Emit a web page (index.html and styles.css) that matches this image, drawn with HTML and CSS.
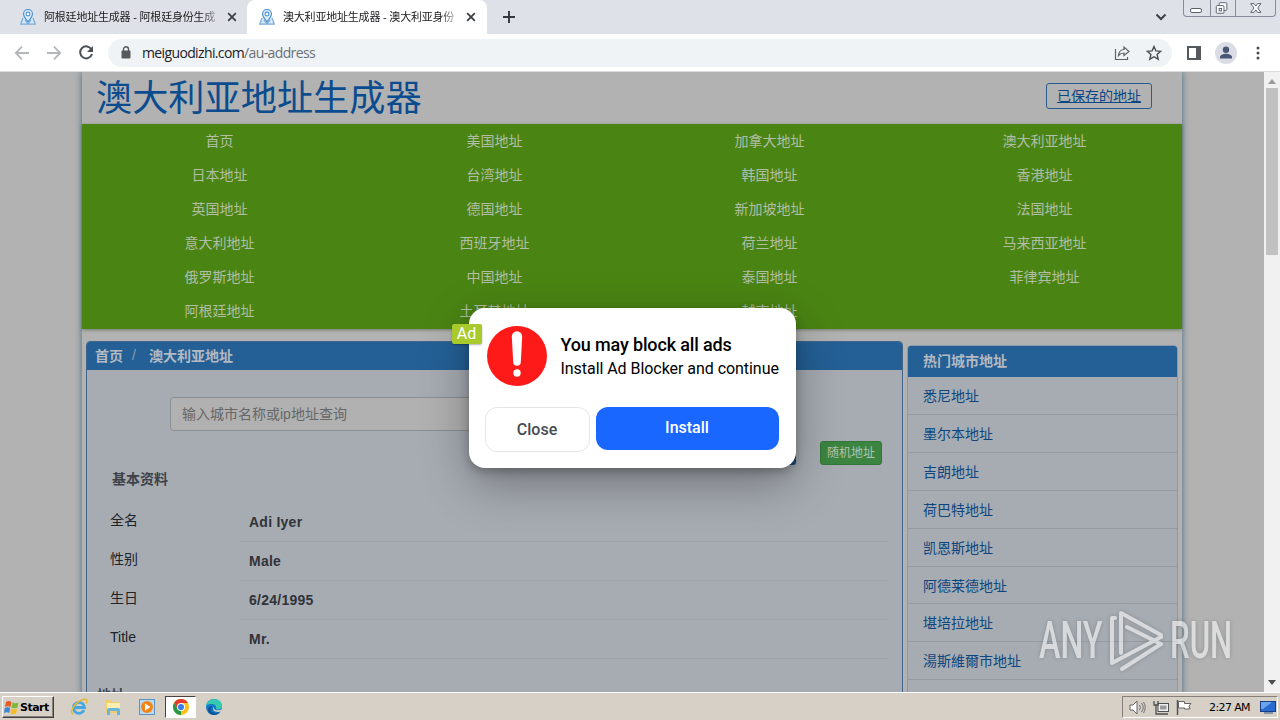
FILE: index.html
```html
<!DOCTYPE html>
<html lang="zh-CN">
<head>
  <meta charset="UTF-8" />
  <meta name="viewport" content="width=device-width, initial-scale=1" />
  <title>澳大利亚地址生成器</title>
  <link rel="stylesheet" href="styles.css">
</head>
<body>

<svg width="0" height="0" class="defs">
  <symbol id="map-pin" viewBox="0 0 16 16">
    <path d="M3 9 .7 15.2h14.6L13 9M5 11l3 4 3-4" fill="#d5e8f8" stroke="#7aabd8" stroke-width="1.2"/>
    <path d="M8 13C6 10 3.500 8 3.500 5a4.500 4.500 0 0 1 9 0c0 3-2.500 5-4.500 8z" fill="#dcecfb" stroke="#4f92d3" stroke-width="1.2"/>
    <circle cx="8" cy="5" r="1.900" fill="#fff" stroke="#4f92d3" stroke-width="1.1"/>
  </symbol>
  <symbol id="cross" viewBox="0 0 10 10"><path d="m1.200 1.200 7.600 7.600m0-7.600L1.200 8.800" stroke="#3c4043" stroke-width="1.800"/></symbol>
</svg>

<!-- Tab strip -->
<div class="tabs">
  <div class="tab">
    <svg class="favicon"><use href="#map-pin"/></svg>
    <span class="tab-title">阿根廷地址生成器 - 阿根廷身份生成</span>
    <svg class="tab-close"><use href="#cross"/></svg>
  </div>
  <div class="tab active">
    <svg class="favicon"><use href="#map-pin"/></svg>
    <span class="tab-title">澳大利亚地址生成器 - 澳大利亚身份</span>
    <svg class="tab-close"><use href="#cross"/></svg>
  </div>
  <svg class="new-tab" viewBox="0 0 12 12"><path d="M6 0v12M0 6h12" stroke="#35393e" stroke-width="1.900"/></svg>
  <svg class="tab-search" viewBox="0 0 12 8"><path d="m1.500 1.500 4.500 4.500 4.500-4.500" fill="none" stroke="#3c4043" stroke-width="2"/></svg>
  <div class="window-buttons">
    <svg width="26" height="16" viewBox="0 0 26 16"><rect x="6.500" y="8.500" width="11" height="4" rx="1.500" fill="#fff" stroke="#5a616c"/></svg>
    <svg width="25" height="16" viewBox="0 0 25 16"><g fill="#fff" stroke="#5a616c"><rect x="8.500" y="2.500" width="8" height="8" rx="1"/><rect x="5.500" y="5.500" width="8" height="8" rx="1"/><rect x="8.500" y="8.500" width="2.500" height="2.500"/></g></svg>
    <svg width="42" height="16" viewBox="0 0 42 16"><path d="M15 3.500h3.500l1.800 2.500 1.800-2.500h3.500L22.200 8l3.400 4.500h-3.500L20.300 10l-1.800 2.500H15L18.400 8z" fill="#fff" stroke="#5a616c"/></svg>
  </div>
</div>

<!-- Address bar -->
<div class="toolbar">
  <svg class="nav-icon" viewBox="0 0 16 16"><path d="M15 8H2m6-6.300L1.800 8 8 14.300" fill="none" stroke="#b4b7bb" stroke-width="1.800"/></svg>
  <svg class="nav-icon" viewBox="0 0 16 16"><path d="M1 8h13M8 1.700 14.200 8 8 14.300" fill="none" stroke="#b4b7bb" stroke-width="1.800"/></svg>
  <svg class="nav-icon" viewBox="0 0 16 16"><path d="M13.500 4.500A6 6 0 1 0 14 9" fill="none" stroke="#4b4f54" stroke-width="2"/><path d="M15 1v6H9z" fill="#4b4f54"/></svg>
  <div class="omnibox">
    <svg width="10" height="13" viewBox="0 0 10 13"><rect x=".5" y="4.500" width="9" height="8" rx="1" fill="#55595e"/><path d="M2.500 5V3.200a2.500 2.500 0 0 1 5 0V5" fill="none" stroke="#55595e" stroke-width="1.400"/></svg>
    <span class="url">meiguodizhi.com<span class="path">/au-address</span></span>
    <svg class="share" viewBox="0 0 16 16"><path d="M1.500 4v10.500h12V12M4.500 10.500C5 6.500 7.500 4.500 10 4.500V2l5 4.500-5 4V8c-2.500 0-4 .7-5.500 2.500z" fill="none" stroke="#5f6368" stroke-width="1.200"/></svg>
    <svg class="star" viewBox="0 0 16 16"><path d="m8 1.500 1.900 4.400 4.800.4-3.600 3.200 1.100 4.700L8 11.700l-4.200 2.500 1.100-4.700L1.300 6.300l4.800-.4z" fill="none" stroke="#4b4f54" stroke-width="1.400"/></svg>
  </div>
  <svg class="side-panel" viewBox="0 0 14 14"><path d="M0 0h14v14H0zM2 2v10h7V2z" fill="#55595e" fill-rule="evenodd"/></svg>
  <svg class="profile" viewBox="0 0 22 22"><circle cx="11" cy="11" r="11" fill="#dadde4"/><circle cx="11" cy="7.800" r="3.200" fill="#4b5575"/><path d="M5 16.500v-1.300c0-2.200 3.500-3.400 6-3.400s6 1.200 6 3.400v1.300z" fill="#4b5575"/></svg>
  <svg class="more" viewBox="0 0 4 14"><g fill="#4b4f54"><circle cx="2" cy="2" r="1.500"/><circle cx="2" cy="7" r="1.500"/><circle cx="2" cy="12" r="1.500"/></g></svg>
</div>

<!-- Page -->
<div class="viewport">
  <div class="page">
    <div class="container">
      <div class="header">
        <h1>澳大利亚地址生成器</h1>
        <a class="saved">已保存的地址</a>
      </div>
      <div class="menu">
        <a>首页</a><a>美国地址</a><a>加拿大地址</a><a>澳大利亚地址</a>
        <a>日本地址</a><a>台湾地址</a><a>韩国地址</a><a>香港地址</a>
        <a>英国地址</a><a>德国地址</a><a>新加坡地址</a><a>法国地址</a>
        <a>意大利地址</a><a>西班牙地址</a><a>荷兰地址</a><a>马来西亚地址</a>
        <a>俄罗斯地址</a><a>中国地址</a><a>泰国地址</a><a>菲律宾地址</a>
        <a>阿根廷地址</a><a>土耳其地址</a><a>越南地址</a>
      </div>
      <div class="columns">
        <div class="panel main">
          <div class="breadcrumb"><b>首页</b><span class="sep">/</span><b>澳大利亚地址</b></div>
          <div class="search">输入城市名称或ip地址查询</div>
          <div class="actions"><span class="btn-blue"></span><span class="btn-green">随机地址</span></div>
          <h4>基本资料</h4>
          <div class="row"><span>全名</span><strong>Adi Iyer</strong></div>
          <div class="row"><span>性别</span><strong>Male</strong></div>
          <div class="row"><span>生日</span><strong>6/24/1995</strong></div>
          <div class="row"><span>Title</span><strong>Mr.</strong></div>
          <h4 class="next">地址</h4>
        </div>
        <div class="panel side">
          <div class="side-head">热门城市地址</div>
          <a>悉尼地址</a>
          <a>墨尔本地址</a>
          <a>吉朗地址</a>
          <a>荷巴特地址</a>
          <a>凯恩斯地址</a>
          <a>阿德莱德地址</a>
          <a>堪培拉地址</a>
          <a>湯斯維爾市地址</a>
          <a>达尔文地址</a>
        </div>
      </div>
    </div>
  </div>
  <div class="scrollbar">
    <svg width="8" height="5" viewBox="0 0 8 5"><path d="M0 5h8L4 0z" fill="#9b9b9b"/></svg>
    <div class="thumb"></div>
    <svg class="down" width="8" height="5" viewBox="0 0 8 5"><path d="M0 0h8L4 5z" fill="#4d4d4d"/></svg>
  </div>
</div>

<!-- Ad popup -->
<div class="popup">
  <span class="ad-badge">Ad</span>
  <div class="popup-top">
    <svg width="60" height="60" viewBox="0 0 60 60"><circle cx="30" cy="30" r="30" fill="#ff1a1a"/><path d="M24.800 10.500a5.200 5.200 0 0 1 10.400 0L33.800 36a3.800 3.800 0 0 1-7.600 0z" fill="#fff"/><circle cx="30" cy="47" r="3.700" fill="#fff"/></svg>
    <div>
      <div class="popup-title">You may block all ads</div>
      <div class="popup-text">Install Ad Blocker and continue</div>
    </div>
  </div>
  <div class="popup-buttons">
    <button class="close">Close</button>
    <button class="install">Install</button>
  </div>
</div>

<!-- Watermark -->
<div class="watermark">
  <span>ANY</span>
  <svg width="56" height="62" viewBox="0 0 56 62">
    <g fill="none" stroke="#fff" stroke-width="4" stroke-linecap="round" stroke-linejoin="round">
      <path d="M6 8H3v45l49-26"/>
      <path d="M12 43V3l40 22v2"/>
      <path d="M18 17l34 17-39 25"/>
    </g>
  </svg>
  <span>RUN</span>
</div>

<!-- Taskbar -->
<div class="taskbar">
  <div class="start">
    <svg width="15" height="15" viewBox="0 0 15 15"><path d="M2 2q3-2 5.500 0L6.500 7Q4 5.500 1 7z" fill="#e65a26"/><path d="M8.500 2.500q3 1.500 6 0l-1 5q-3 1.500-6 0z" fill="#7cb73c"/><path d="M.8 8Q4 6.500 6.200 8l-1 5Q3 11.500 0 13z" fill="#3f86d2"/><path d="M7.200 8.500q3 1.500 6 0l-1 5q-3 1.500-6 0z" fill="#f5bb2d"/></svg>
    Start
  </div>
  <svg class="task-icon" viewBox="0 0 18 18"><path d="M14 12.200A5.500 5.500 0 1 1 14.500 9.500H5" fill="none" stroke="#45a7e3" stroke-width="2.800"/><path d="M3.500 16C-2 15 5 4 13 1.500c4-1 4.500 1.500 3 4" fill="none" stroke="#e8b92e" stroke-width="1.500"/></svg>
  <svg class="task-icon" viewBox="0 0 18 18"><path d="M2 2h5l1 2h8v11H2z" fill="#f0cf69"/><path d="M3 5h13v6H3z" fill="#fbeeb0"/><path d="M3 17v-5q0-2 2-2h9q2 0 2 2v5h-3v-4H6v4z" fill="#68b5df"/></svg>
  <svg class="task-icon" viewBox="0 0 18 18"><rect x="1.500" y="1.500" width="15" height="15" fill="#b8dbf1" stroke="#5a93c4"/><circle cx="9" cy="9" r="6" fill="#f28418"/><path d="M7 5.500v7L12.500 9z" fill="#fff"/></svg>
  <div class="task-active">
    <svg width="16" height="16" viewBox="0 0 16 16"><circle cx="8" cy="8" r="8" fill="#fbc116"/><path d="M1.070 4A8 8 0 0 1 14.930 4H8L4.500 10z" fill="#e33b2e"/><path d="M1.070 4 4.540 10 8 12 8 16A8 8 0 0 1 1.070 4z" fill="#229a48"/><circle cx="8" cy="8" r="4" fill="#fff"/><circle cx="8" cy="8" r="3.100" fill="#3b7ded"/></svg>
  </div>
  <svg class="task-icon" viewBox="0 0 18 18"><circle cx="9" cy="9" r="8" fill="#1479c9"/><path d="M1 8C2-1 17-1 17 8c0 4-4 4-6 3 1-3-1-5-4-5-3-.3-5 .5-6 2z" fill="#35c9b0"/><path d="M7 8c-3 5 2 9 8 6-4 5-12 3-12-2 0-3 2-4 4-4z" fill="#0b559f"/><path d="M9.500 8c-2 3 1 5.500 8 3.500L16 13.500C10 15 6 12 9.500 8z" fill="#d6d0c7"/></svg>
  <div class="tray">
    <svg width="17" height="15" viewBox="0 0 17 15"><path d="M1 5h3l4-4v13l-4-4H1z" fill="#fff" stroke="#656565"/><path d="M10.500 5q2 2.500 0 5M12.500 3q3.500 4.500 0 9M14.500 2q3.500 5.500 0 11" fill="none" stroke="#6d6d6d"/></svg>
    <svg width="16" height="15" viewBox="0 0 16 15"><rect x="5" y="3.500" width="10.500" height="8" fill="#eee" stroke="#4f4f4f"/><path d="M7 14h8M3 6v8h4M1 1v4h4V1M3 5v3" fill="none" stroke="#4f4f4f" stroke-width="1.300"/><rect x="7" y="5.500" width="6.500" height="4" fill="#999"/></svg>
    <svg width="16" height="15" viewBox="0 0 16 15"><path d="M1.500 0v15" stroke="#555" stroke-width="1.500"/><path d="M2.500 1.500h6v2H15L13 6l1 3H8.500V8h-6z" fill="#fff" stroke="#666"/></svg>
    <span class="clock">2:27 AM</span>
    <svg width="16" height="13" viewBox="0 0 16 13"><rect x=".5" y=".5" width="15" height="10" fill="#2a6bd1" stroke="#173f84"/><path d="M1 1h11L3 8H1z" fill="#6ca5ec"/><path d="M4 12h9" stroke="#355783"/></svg>
  </div>
</div>

</body>
</html>
```
FILE: styles.css
```css
* {
  box-sizing: border-box;
}

body {
  margin: 0;
  width: 1280px;
  height: 720px;
  overflow: hidden;
  display: flex;
  flex-direction: column;
  font-family: "Liberation Sans", "Noto Sans CJK SC", sans-serif;
  font-size: 14px;
}

svg {
  flex: none;
}

.defs {
  position: absolute;
}

/* Browser tabs */
.tabs {
  height: 34px;
  flex: none;
  display: flex;
  align-items: center;
  background: #dee1e7;
}

.tab {
  height: 34px;
  display: flex;
  align-items: center;
  width: 247px;
  padding-left: 20px;
}

.tab.active {
  width: 240px;
  padding-left: 12px;
  background: #fff;
  border-radius: 8px 8px 0 0;
}

.favicon {
  width: 16px;
  height: 16px;
}

.tab-title {
  width: 174px;
  height: 18px;
  margin-left: 8px;
  white-space: nowrap;
  font-size: 11px;
  line-height: 18px;
  letter-spacing: -0.2px;
  color: #202124;
  mask-image: linear-gradient(to right, #000 90%, transparent 103%);
}

.tab-close {
  width: 10px;
  height: 10px;
  margin-left: 9px;
}

.new-tab {
  width: 12px;
  height: 12px;
  margin-left: 16px;
}

.tab-search {
  width: 12px;
  height: 8px;
  margin-left: auto;
}

.window-buttons {
  align-self: flex-start;
  display: flex;
  width: 93px;
  height: 17px;
  margin: 0 4px 0 16px;
  border: 1px solid #858b98;
  border-top: 0;
  border-radius: 0 0 4px 4px;
}

.window-buttons svg + svg {
  border-left: 1px solid #858b98;
}

/* Toolbar */
.toolbar {
  height: 38px;
  flex: none;
  display: flex;
  align-items: center;
  padding: 0 20px 0 14px;
  background: #fff;
  border-bottom: 1px solid #dadcdf;
}

.nav-icon {
  width: 16px;
  height: 16px;
  margin-right: 16px;
}

.omnibox {
  width: 1064px;
  height: 28px;
  margin-left: -2px;
  padding: 0 10px 0 13px;
  display: flex;
  align-items: center;
  background: #f0f3f5;
  border-radius: 14px;
}

.url {
  margin-left: 11px;
  font: 14px "Open Sans", sans-serif;
  letter-spacing: -0.63px;
  color: #202124;
}

.path {
  color: #6b6f74;
}

.share,
.star {
  width: 16px;
  height: 16px;
}

.share {
  margin-left: auto;
}

.star {
  margin-left: 16px;
}

.side-panel {
  width: 14px;
  height: 14px;
  margin-left: 15px;
}

.profile {
  width: 22px;
  height: 22px;
  margin-left: 14px;
}

.more {
  width: 4px;
  height: 14px;
  margin-left: auto;
}

/* Page, shown under the dimming layer of the popup */
.viewport {
  height: 620px;
  flex: none;
  display: flex;
}

.page {
  width: 1264px;
  height: 620px;
  overflow: hidden;
  background: #b2b2b2;
}

.container {
  width: 1100px;
  height: 700px;
  margin-left: 82px;
  background: #b2b2b2;
  box-shadow: 0 0 7px #476b82;
}

.header {
  height: 52px;
  padding: 0 30px 0 14px;
  display: flex;
  align-items: center;
  justify-content: space-between;
}

h1 {
  margin: 0;
  padding-top: 2px;
  font-size: 36.2px;
  font-weight: normal;
  line-height: 50px;
  color: #0b4c8f;
}

.saved {
  width: 106px;
  height: 26px;
  margin-top: -4px;
  border: 1px solid #285b91;
  border-radius: 3px;
  line-height: 24px;
  text-align: center;
  text-decoration: underline;
  color: #0b4684;
}

.menu {
  height: 205px;
  display: grid;
  grid-template-columns: repeat(4, 1fr);
  grid-auto-rows: 34px;
  background: #4a8513;
  box-shadow: 0 1px 3px rgba(50, 70, 40, 0.5);
}

.menu a {
  line-height: 34px;
  text-align: center;
  color: #b2bda5;
}

.columns {
  display: flex;
  gap: 4px;
  padding: 12px 4px 0;
}

.panel {
  height: 400px;
  background: #a7acb3;
  border: 1px solid #8799aa;
  border-radius: 4px;
}

.main {
  width: 817px;
  border-color: #40658c;
}

.breadcrumb {
  height: 28px;
  display: flex;
  align-items: center;
  padding: 0 0 2px 8px;
  background: #246096;
  border-radius: 3px 3px 0 0;
  color: #b2bac2;
}

.sep {
  width: 26px;
  padding-left: 9px;
  color: #879eb5;
}

.search {
  width: 580px;
  height: 34px;
  margin: 27px 0 0 83px;
  padding-left: 11px;
  border: 1px solid #8c8f92;
  border-radius: 4px;
  background: #b1b1b1;
  line-height: 32px;
  color: #676767;
}

.actions {
  height: 24px;
  margin-top: 10px;
  padding-right: 20px;
  display: flex;
  justify-content: flex-end;
  gap: 24px;
}

.btn-blue {
  width: 50px;
  background: #1b4b77;
  border-radius: 3px;
}

.btn-green {
  width: 62px;
  border-radius: 3px;
  background: #3b8540;
  border: 1px solid #337738;
  line-height: 22px;
  font-size: 12px;
  text-align: center;
  color: #b2c3b3;
}

h4 {
  height: 20px;
  margin: 4px 0 14px 25px;
  font-size: 14px;
  line-height: 20px;
  color: #3e4248;
}

.row {
  height: 39px;
  display: flex;
  margin-left: 23px;
  line-height: 37px;
  color: #202327;
}

.row span {
  width: 130px;
  line-height: 35px;
}

.row strong {
  width: 648px;
  padding-left: 9px;
  padding-top: 1px;
  border-bottom: 1px solid #9ea3aa;
  color: #303337;
  letter-spacing: 0.25px;
}

.next {
  margin: 26px 0 0 10px;
}

.side {
  width: 271px;
  margin-top: 4px;
}

.side-head {
  height: 31px;
  padding-left: 15px;
  background: #246096;
  border-radius: 3px 3px 0 0;
  font-weight: bold;
  line-height: 30px;
  color: #b2bac2;
}

.side a {
  display: block;
  height: 37.8px;
  padding-left: 15px;
  border-bottom: 1px solid #969ba1;
  line-height: 38px;
  color: #0d467e;
}

.side-head + a {
  height: 38.4px;
}

.scrollbar {
  width: 16px;
  padding: 7px 2px;
  display: flex;
  flex-direction: column;
  align-items: center;
  background: #f1f1f1;
}

.thumb {
  width: 12px;
  height: 167px;
  margin-top: 4px;
  background: #c1c1c1;
}

.down {
  margin-top: auto;
}

/* Ad popup */
.popup {
  position: absolute;
  left: 468.5px;
  top: 308px;
  width: 327px;
  height: 160px;
  padding: 18px 17px 0 18px;
  background: #fff;
  border-radius: 16px;
  box-shadow: 0 16px 50px rgba(0, 0, 0, 0.32), 0 4px 10px rgba(0, 0, 0, 0.25);
  font-family: Roboto, sans-serif;
}

.ad-badge {
  position: absolute;
  left: -17px;
  top: 16px;
  width: 30px;
  height: 20px;
  background: #a8ca2c;
  border-radius: 2px;
  box-shadow: 0 1px 2px rgba(0, 0, 0, 0.3);
  font-size: 16px;
  line-height: 20px;
  text-align: center;
  color: #fff;
}

.popup-top {
  height: 60px;
  display: flex;
  gap: 14px;
  white-space: nowrap;
  color: #000;
}

.popup-title {
  margin-top: 7px;
  font-size: 18px;
  font-weight: 500;
  line-height: 24px;
  letter-spacing: -0.15px;
}

.popup-text {
  font-size: 16px;
  line-height: 23px;
  letter-spacing: -0.05px;
}

.popup-buttons {
  display: flex;
  gap: 6px;
  margin: 21px 0 0 -2px;
}

.popup button {
  font: 500 16px Roboto, sans-serif;
  border-radius: 12px;
  padding: 0;
}

.close {
  width: 105px;
  height: 45px;
  border: 1px solid #e5e6e9;
  background: #fff;
  color: #464a52;
}

.popup .install {
  width: 183px;
  height: 43px;
  padding-bottom: 2px;
  border: 0;
  background: #1967ff;
  color: #fff;
}

/* Watermark */
.watermark {
  position: absolute;
  left: 1039px;
  top: 609px;
  width: 193px;
  height: 64px;
  display: flex;
  align-items: center;
  opacity: 0.55;
  filter: drop-shadow(0 0 2px rgba(70, 75, 80, 0.6));
  color: #fff;
}

.watermark svg {
  margin: 0 5px 0 6px;
}

.watermark span {
  width: 64px;
  height: 64px;
  font: 500 52px/64px Roboto, sans-serif;
  white-space: nowrap;
  transform: scaleX(0.62);
  transform-origin: left;
}

.watermark span:last-child {
  transform: scaleX(0.6);
}

/* Taskbar */
.taskbar {
  height: 28px;
  flex: none;
  display: flex;
  align-items: center;
  padding: 1px 2px 0;
  background: #d6d0c7;
  border-top: 1px solid #fff;
}

.start {
  width: 52px;
  height: 22px;
  display: flex;
  align-items: center;
  gap: 1px;
  padding-left: 1px;
  border: 1px solid;
  border-color: #fff #404040 #404040 #fff;
  box-shadow: inset -1px -1px #85817a;
  font: bold 11px "DejaVu Sans", sans-serif;
  letter-spacing: -0.5px;
  color: #000;
}

.task-icon {
  width: 18px;
  height: 18px;
  margin-left: 16px;
}

.task-active {
  width: 31px;
  height: 22px;
  margin: 0 -7px 0 9px;
  display: flex;
  align-items: center;
  justify-content: center;
  background: #fff;
  border: 1px solid;
  border-color: #444 #fff #fff #444;
}

.tray {
  width: 156px;
  height: 22px;
  margin-left: auto;
  padding: 0 1px 0 6px;
  display: flex;
  align-items: center;
  gap: 7px;
  border: 1px solid;
  border-color: #85817a #fff #fff #85817a;
}

.clock {
  margin: 0 2px 0 10px;
  flex: 1;
  font: 11px "DejaVu Sans", sans-serif;
  letter-spacing: -0.6px;
  white-space: nowrap;
  color: #000;
}
```
